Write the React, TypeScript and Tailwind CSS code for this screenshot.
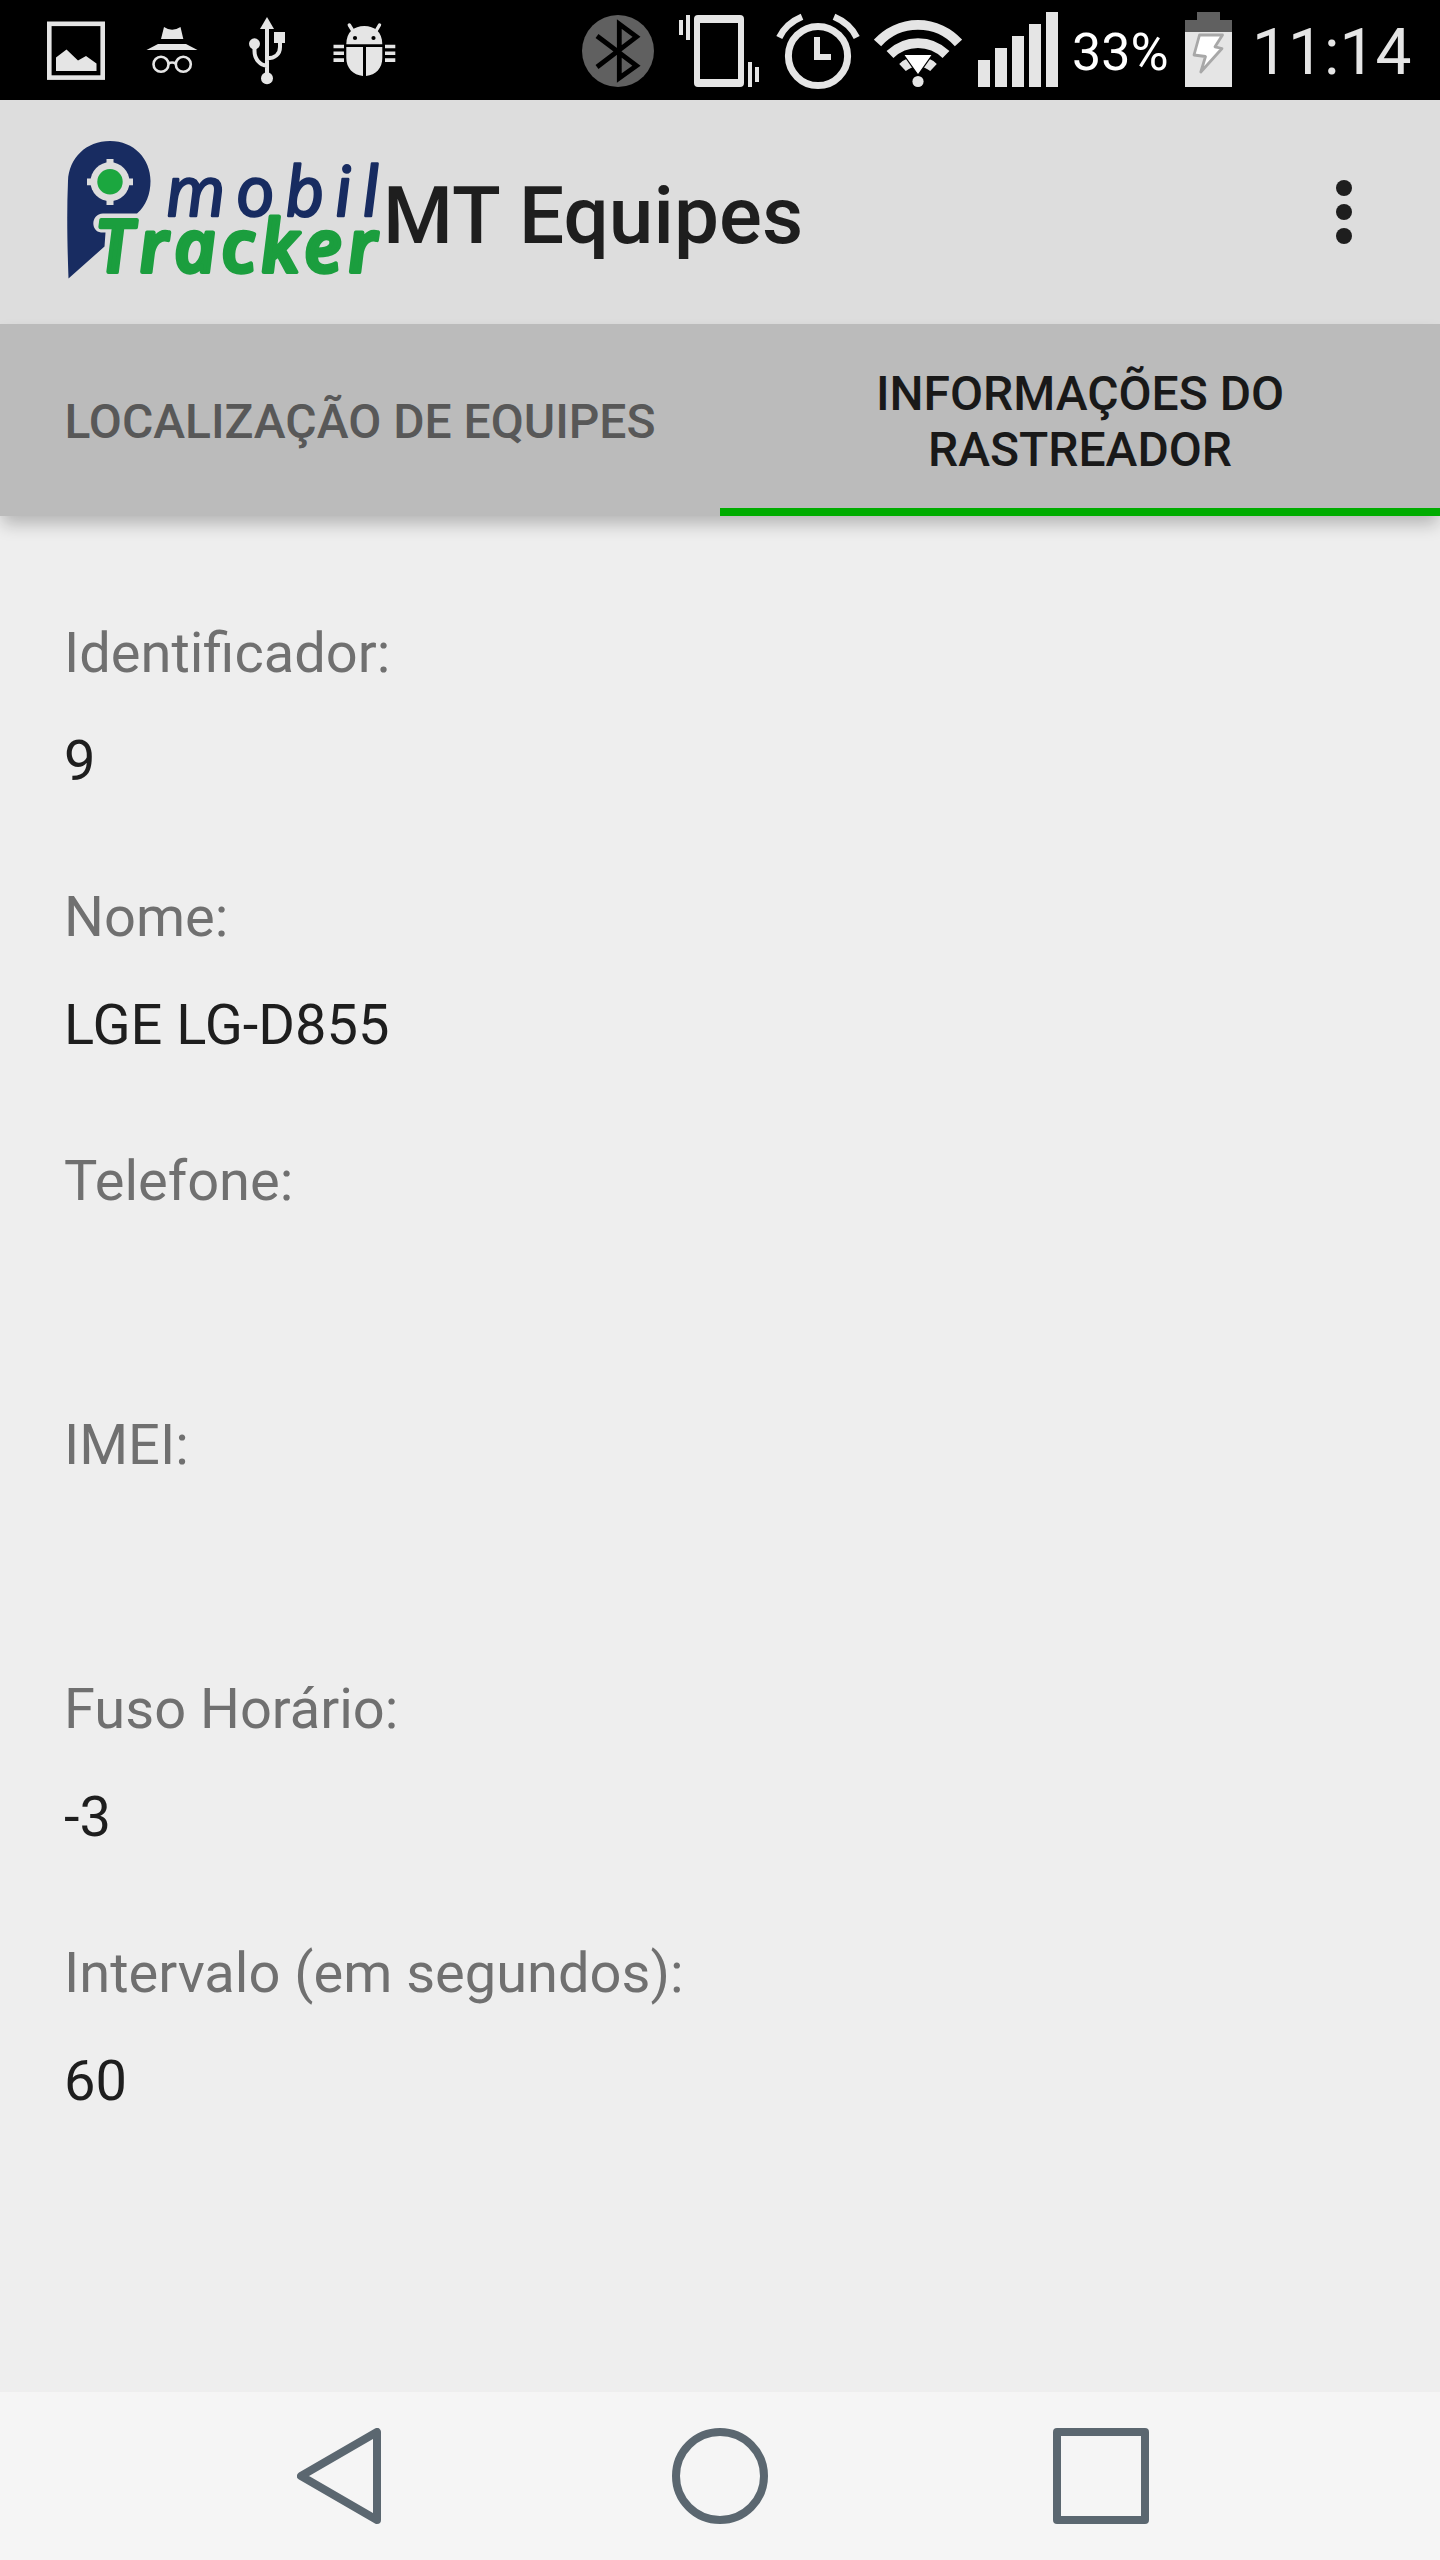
import React from 'react';

interface Field {
  label: string;
  value?: string;
}

const fields: Field[] = [
  { label: 'Identificador:', value: '9' },
  { label: 'Nome:', value: 'LGE LG-D855' },
  { label: 'Telefone:' },
  { label: 'IMEI:' },
  { label: 'Fuso Horário:', value: '-3' },
  { label: 'Intervalo (em segundos):', value: '60' },
];

const StatusBar: React.FC = () => (
  <div className="flex h-[100px] items-start overflow-hidden bg-black pl-[47px] text-[#e5e5e5]">
    {/* Notifications */}
    <svg className="h-[100px] w-[58px] shrink-0" viewBox="47 0 58 100" fill="currentColor">
      <rect x="49.3" y="23.8" width="53.4" height="53.8" fill="none" stroke="currentColor" strokeWidth="4.6" />
      <path d="M56 57.5 66.5 49.5 78 60.5 86 56 96.5 63.5V71H56Z" />
    </svg>
    <svg className="ml-[41px] h-[100px] w-[52px] shrink-0" viewBox="146 0 52 100" fill="currentColor">
      <path d="M164 27Q172 32.500 180.500 27L183.300 39H161Z" />
      <path d="M158 44H186L197.500 50H146.500Z" />
      <g fill="none" stroke="currentColor" strokeWidth="2.6">
        <circle cx="161" cy="64.300" r="7.500" />
        <circle cx="183.300" cy="64.300" r="7.500" />
        <path d="M168.500 63.500Q172.100 61.500 175.800 63.500" />
      </g>
    </svg>
    <svg className="ml-[50px] h-[100px] w-[38px] shrink-0" viewBox="248 0 38 100" fill="currentColor">
      <path d="M267 17 274 29H260Z" />
      <circle cx="254.500" cy="43.800" r="5.500" />
      <circle cx="267" cy="78.300" r="6" />
      <rect x="274" y="32" width="11" height="11" />
      <path
        d="M267 27V76M254.500 44V51C254.500 59 260 65.500 267 65.500M280 42V47C280 54 275 58.300 267 58.300"
        fill="none"
        stroke="currentColor"
        strokeWidth="4"
      />
    </svg>
    <svg className="ml-[47px] h-[100px] w-[63px] shrink-0" viewBox="333 0 63 100" fill="currentColor">
      <path d="M346.300 44.300C346.300 32 354 26 364.300 26S382.300 32 382.300 44.300Z" />
      <path d="M346.300 47H363V76C353 75 346.300 68 346.300 58ZM366 47H382.300V58C382.300 68 376 75 366 76Z" />
      <path d="M349.300 25 354.500 33.500M379.500 25 374.500 33.500" stroke="currentColor" strokeWidth="3.400" strokeLinecap="round" />
      <path d="M333.500 44.700H344V48.300H333.500ZM333.500 51.500H344V55H333.500ZM333.500 58.300H344V62H333.500ZM385 44.700H395.300V48.300H385ZM385 51.500H395.300V55H385ZM385 58.300H395.300V62H385Z" />
      <circle cx="355" cy="38" r="2.100" fill="#000" />
      <circle cx="373.500" cy="38" r="2.100" fill="#000" />
    </svg>

    {/* System indicators */}
    <svg className="ml-[186px] h-[100px] w-[72px] shrink-0" viewBox="582 0 72 100">
      <circle cx="618" cy="51" r="36" fill="#606060" />
      <path d="M597 36 636.500 65.800 619.300 78V24L636.500 36.800 597 67" fill="none" stroke="#000" strokeWidth="4.800" />
    </svg>
    <svg className="ml-[25px] h-[100px] w-[80px] shrink-0" viewBox="679 0 80 100" fill="currentColor">
      <path d="M679 20H683V35H679ZM686 15H690V40H686ZM748 62H752V87H748ZM755 67H759V82H755Z" />
      <path
        fillRule="evenodd"
        d="M698 15H740A4 4 0 0 1 744 19V83A4 4 0 0 1 740 87H698A4 4 0 0 1 694 83V19A4 4 0 0 1 698 15ZM700 23V79H738V23Z"
      />
    </svg>
    <svg className="ml-[17px] h-[100px] w-[84px] shrink-0" viewBox="776 0 84 100" fill="none" stroke="currentColor">
      <circle cx="818" cy="56" r="29.600" strokeWidth="7" />
      <path d="M779.300 37.500Q786 23.500 802 16.800M856.700 37.500Q850 23.500 834 16.800" strokeWidth="6.600" />
      <path d="M817 37V57H831" strokeWidth="6" />
    </svg>
    <svg className="ml-[14px] h-[100px] w-[88px] shrink-0" viewBox="874 0 88 100" fill="none" stroke="currentColor" strokeWidth="9.800">
      <path d="M877.500 43A54.500 54.500 0 0 1 958.500 43" />
      <path d="M890 54.500A40 40 0 0 1 946 54.500" />
      <path d="M902.500 67.500A23 23 0 0 1 933.500 67.500" />
      <path d="M903.500 54.500H932.500L918 75Z" fill="#fff" stroke="#000" strokeWidth="1.200" />
      <circle cx="918" cy="81.500" r="5.600" fill="currentColor" stroke="none" />
    </svg>
    <svg className="ml-4 h-[100px] w-20 shrink-0" viewBox="978 0 80 100" fill="currentColor">
      <path d="M978 60H990V87H978ZM995 48H1007V87H995ZM1012 36H1024V87H1012ZM1029 24H1041V87H1029ZM1046 12H1058V87H1046Z" />
    </svg>
    <span className="ml-[14px] w-[97px] shrink-0 text-[52px] leading-[106px] text-white">33%</span>
    <svg className="ml-4 h-[100px] w-[47px] shrink-0" viewBox="1185 0 47 100" fill="currentColor">
      <path d="M1197 12H1220V20H1232V32H1185V20H1197Z" fill="#606060" />
      <path d="M1185 32H1232V87H1185Z" />
      <path
        d="M1199.500 35H1222.500L1215 46.800 1222 48.500 1200.800 72 1205.500 56.500 1194 55Z"
        fill="#fff"
        stroke="#a8a8a8"
        strokeWidth="2.800"
        strokeLinejoin="round"
      />
    </svg>
    <span className="ml-[20px] text-[64px] leading-[106px]">11:14</span>
  </div>
);

const Logo: React.FC = () => (
  <svg className="h-[160px] w-[318px] shrink-0 overflow-visible" viewBox="64 132 318 160">
    <path
      d="M68.500 278.500C67.500 250 66.500 215 68 181C69 158 86 141 110 141C134 141 150.500 159 150.500 181C150.500 194 146 206 137 213.500H103C91 214 90 231 101 232.500H105.500L104.500 246.500Z"
      fill="#182c61"
    />
    <g fill="#dddddd">
      <circle cx="110" cy="181.800" r="19.500" />
      <path d="M106.500 159H113.500V205H106.500ZM87 178.500H133V185.300H87Z" />
    </g>
    <circle cx="110" cy="181.800" r="12.700" fill="#1ba73f" />
    <text
      transform="translate(167 216) skewX(5)"
      textLength="214"
      className="font-['Open_Sans'] text-[69px] font-medium italic"
      fill="#182c61"
      stroke="#182c61"
      strokeWidth="2.500"
      strokeLinejoin="round"
    >
      mobil
    </text>
    <text
      transform="translate(98 271.500) skewX(5)"
      textLength="281"
      className="font-['Open_Sans'] text-[73px] font-semibold italic"
      fill="#1b9e3e"
      stroke="#1b9e3e"
      strokeWidth="4"
      strokeLinejoin="round"
    >
      Tracker
    </text>
  </svg>
);

const AppBar: React.FC = () => (
  <header className="flex h-[224px] items-center bg-[#dddddd] pl-16">
    <Logo />
    <h1 className="pt-[7px] pl-px text-[80px] leading-[94px] font-medium tracking-[0.1px] text-[#1e1e1e]">MT Equipes</h1>
    <button className="mr-[88px] ml-auto flex flex-col gap-2">
      <span className="size-4 rounded-full bg-[#1e1e1e]" />
      <span className="size-4 rounded-full bg-[#1e1e1e]" />
      <span className="size-4 rounded-full bg-[#1e1e1e]" />
    </button>
  </header>
);

const Tabs: React.FC = () => (
  <nav className="grid h-[192px] grid-cols-2 bg-[#bbbbbb] text-center text-[48px] leading-[56px] font-medium shadow-[0_10px_16px_-2px_rgba(0,0,0,0.24)]">
    <button className="px-12 pt-1 text-[#585858]">LOCALIZAÇÃO DE EQUIPES</button>
    <button className="border-b-8 border-[#00ac00] px-12 pt-3 text-[#191919]">
      INFORMAÇÕES DO
      <br />
      RASTREADOR
    </button>
  </nav>
);

const NavigationBar: React.FC = () => (
  <footer className="flex h-[168px] items-center bg-[#f5f5f5] pl-[297px]">
    <svg className="h-24 w-[84px]" viewBox="0 0 84 96" fill="none" stroke="#5b6770" strokeWidth="8" strokeLinejoin="round">
      <path d="M4 48 80 4V92Z" />
    </svg>
    <div className="ml-[291px] size-24 rounded-full border-8 border-[#5b6770]" />
    <svg className="ml-[285px] size-24" viewBox="0 0 96 96" fill="none" stroke="#5b6770" strokeWidth="8" strokeLinejoin="round">
      <path d="M4 4H92V92H4Z" />
    </svg>
  </footer>
);

const App: React.FC = () => {
  return (
    <div className="flex h-[2560px] w-[1440px] flex-col overflow-hidden bg-[#eeeeee] font-[Roboto,sans-serif]">
      <StatusBar />
      <AppBar />
      <Tabs />
      <main className="flex flex-1 flex-col gap-12 px-16 pt-[83px] text-[56px] leading-[108px]">
        {fields.map((field) => (
          <div key={field.label}>
            <div className="text-[#707070]">{field.label}</div>
            <div className="h-[108px] text-[#1e1e1e]">{field.value}</div>
          </div>
        ))}
      </main>
      <NavigationBar />
    </div>
  );
};

export default App;
